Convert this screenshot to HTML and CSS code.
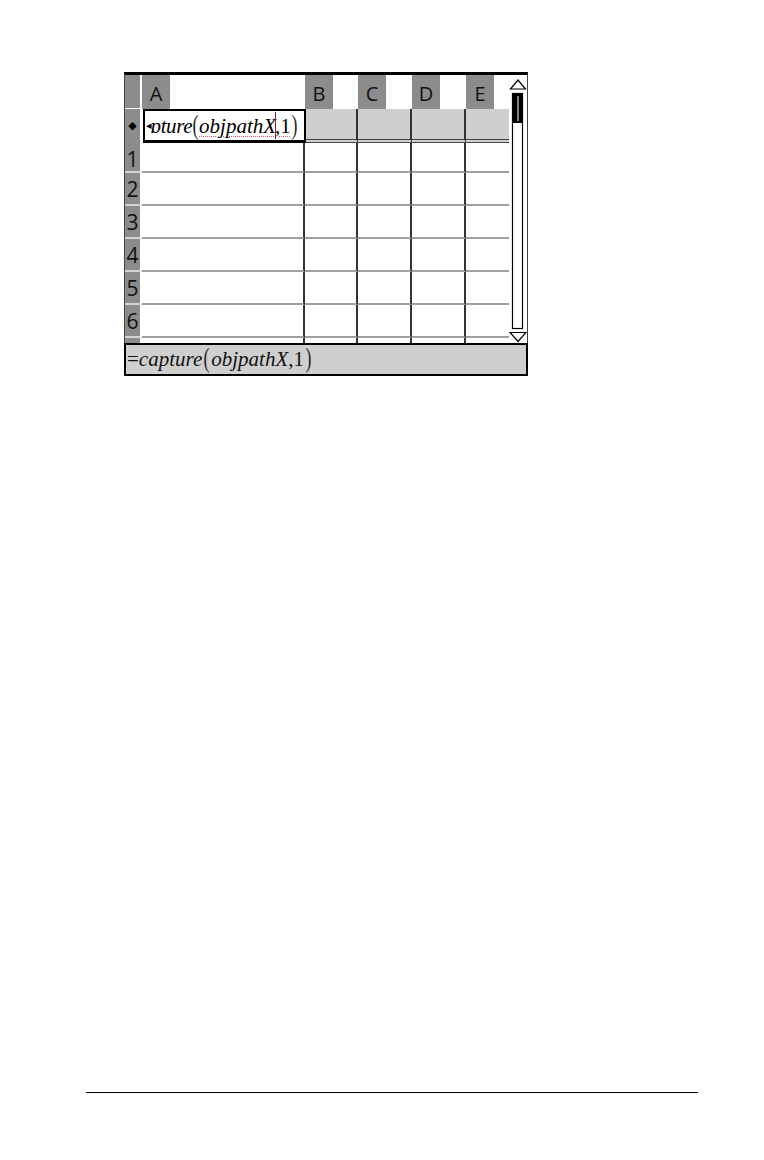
FILE: index.html
```html
<!DOCTYPE html>
<html>
<head>
<meta charset="utf-8">
<link rel="stylesheet" href="styles.css">
</head>
<body>
<div class="sheet">
  <div class="table">
    <!-- header row -->
    <div class="rh rh-top"></div>
    <div class="hc"><span class="tag">A</span></div>
    <div class="hc"><span class="tag">B</span></div>
    <div class="hc"><span class="tag">C</span></div>
    <div class="hc"><span class="tag">D</span></div>
    <div class="hc last"><span class="tag">E</span></div>

    <!-- formula row -->
    <div class="rh rh-f">◆</div>
    <div class="edit"><span class="arr">◂</span><span class="it tight">ɒture</span><span class="par pe">(</span><span class="u"><span class="it">objpathX</span><span class="cur"></span>,1</span><span class="par pe">)</span></div>
    <div class="fc"></div>
    <div class="fc"></div>
    <div class="fc"></div>
    <div class="fc last"></div>

    <div class="rh">1</div><div class="c"></div><div class="c"></div><div class="c"></div><div class="c"></div><div class="c last"></div>
    <div class="rh">2</div><div class="c"></div><div class="c"></div><div class="c"></div><div class="c"></div><div class="c last"></div>
    <div class="rh">3</div><div class="c"></div><div class="c"></div><div class="c"></div><div class="c"></div><div class="c last"></div>
    <div class="rh">4</div><div class="c"></div><div class="c"></div><div class="c"></div><div class="c"></div><div class="c last"></div>
    <div class="rh">5</div><div class="c"></div><div class="c"></div><div class="c"></div><div class="c"></div><div class="c last"></div>
    <div class="rh">6</div><div class="c"></div><div class="c"></div><div class="c"></div><div class="c"></div><div class="c last"></div>
    <div class="rh rh-p"></div><div class="c p"></div><div class="c p"></div><div class="c p"></div><div class="c p"></div><div class="c p last"></div>
  </div>
  <div class="scroll">
    <svg width="18" height="268" viewBox="0 0 18 268">
      <polygon points="9,5 1.5,14 16.5,14" fill="#fff" stroke="#000" stroke-width="1.2"/>
      <rect x="3.5" y="18.5" width="10" height="235" fill="#fff" stroke="#000" stroke-width="1.2"/>
      <rect x="3" y="18" width="11" height="30" fill="#000"/>
      <line x1="9" y1="21" x2="9" y2="46" stroke="#fff" stroke-width="1"/>
      <polygon points="1,257.5 17,257.5 9,266.5" fill="#fff" stroke="#000" stroke-width="1.2"/>
    </svg>
  </div>
</div>
<div class="fbar"><span class="up">=</span><span class="it">capture</span><span class="par">(</span><span class="it">objpathX</span><span class="up">,1</span><span class="par">)</span></div>
<div class="rule"></div>
</body>
</html>
```

FILE: styles.css
```css
html, body {
  margin: 0;
  padding: 0;
  background: #fff;
}

.sheet {
  margin: 72px 0 0 124px;
  width: 404px;
  box-sizing: border-box;
  border-top: 3px solid #000;
  border-left: 1px solid #444;
  border-right: 1px solid #444;
  display: flex;
  background: #fff;
}

.table {
  display: grid;
  grid-template-columns: 17px 163px 53px 54px 54px 43px;
  grid-template-rows: 34px 34px 30px 33px 33px 33px 33px 33px 5px;
  width: 384px;
}

.rh {
  box-sizing: border-box;
  background: #8c8c8c;
  border-right: 2px solid #fff;
  border-bottom: 2px solid #d4d4d4;
  font-family: "Open Sans", "DejaVu Sans", sans-serif;
  font-size: 21px;
  color: #111;
  text-align: center;
  line-height: 33px;
  overflow: hidden;
}

.rh-top {
  border-bottom: 1px solid #fff;
}

.rh-f {
  font-size: 11px;
  line-height: 32px;
  color: #000;
  border-bottom: none;
}

.rh-p {
  border-bottom: none;
}

.hc {
  box-sizing: border-box;
  border-right: 2px solid #fff;
  background: #fff;
}

.hc.last {
  border-right: none;
}

.tag {
  display: block;
  width: 28px;
  height: 34px;
  background: #8c8c8c;
  font-family: "Open Sans", "DejaVu Sans", sans-serif;
  font-size: 20px;
  line-height: 37px;
  color: #111;
  text-align: center;
}

.edit {
  box-sizing: border-box;
  border: 2px solid #000;
  border-bottom-width: 3px;
  margin-left: 1px;
  margin-right: -1px;
  background: #fff;
  font-family: "Liberation Serif", "Times New Roman", serif;
  font-size: 21px;
  line-height: 29px;
  color: #000;
  padding-left: 1px;
  white-space: nowrap;
  overflow: hidden;
  position: relative;
  z-index: 1;
}

.arr {
  font-size: 11px;
  vertical-align: 4px;
  font-family: "DejaVu Sans", sans-serif;
  margin-right: -1px;
}

.tight {
  letter-spacing: -0.4px;
}

.it {
  font-style: italic;
}

.up {
  font-style: normal;
}

.par {
  display: inline-block;
  transform: scale(0.85, 1.3);
  transform-origin: 50% 62%;
  margin: 0 1px;
  font-weight: normal;
  color: #222;
}

.par.pe {
  margin: 0;
}

.u {
  text-decoration: underline dotted #e05060;
  text-underline-offset: 3px;
  text-decoration-thickness: 1px;
}

.cur {
  display: inline-block;
  width: 1px;
  height: 27px;
  background: #8a2030;
  vertical-align: -6px;
  margin: 0 -1px 0 -1px;
}

.fc {
  box-sizing: border-box;
  background: #cfcfcf;
  border-right: 2px solid #333;
  border-bottom: 4px double #444;
}

.fc.last {
  border-right: none;
}

.c {
  box-sizing: border-box;
  background: #fff;
  border-right: 2px solid #333;
  border-bottom: 2px solid #a0a0a0;
}

.c.last {
  border-right: none;
}

.c.p {
  border-bottom: none;
}

.scroll {
  width: 18px;
  background: #fff;
}

.scroll svg {
  display: block;
}

.fbar {
  margin-left: 124px;
  width: 404px;
  height: 33px;
  box-sizing: border-box;
  border: 2px solid #000;
  background: #cfcfcf;
  font-family: "Liberation Serif", "Times New Roman", serif;
  font-size: 21px;
  line-height: 29px;
  color: #111;
  padding-left: 1px;
  white-space: nowrap;
}

.rule {
  margin: 716px 0 0 86px;
  width: 612px;
  height: 1px;
  background: #000;
}
```
